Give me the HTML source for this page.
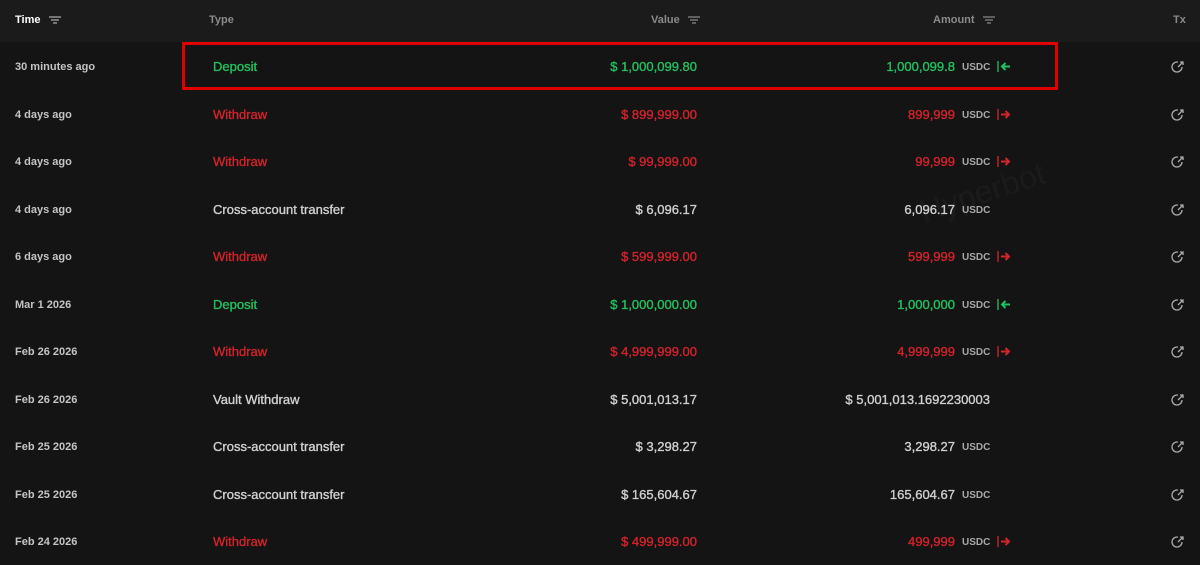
<!DOCTYPE html>
<html><head><meta charset="utf-8"><style>
*{margin:0;padding:0;box-sizing:border-box}
body{width:1200px;height:558px;background:#141414;font-family:"Liberation Sans",sans-serif;overflow:hidden;position:relative;color:#cfcfcf}
.hdr{position:absolute;left:0;top:0;width:1200px;height:42px;background:#1b1b1b}
.h{position:absolute;top:14px;font-size:11px;font-weight:bold;color:#8a8a8a}
.row{position:absolute;left:0;width:1200px;height:47px}
.t{position:absolute;left:15px;top:18px;font-size:11px;font-weight:bold;color:#c4c4c4}
.ty,.v,.a{position:absolute;top:16px;font-size:13px;-webkit-text-stroke:0.35px currentColor}
.ty{left:213px}
.v{right:503px}
.a{right:245px}
.u{position:absolute;left:962px;top:19px;font-size:10px;font-weight:bold;color:#a8a8a8}
.ar{position:absolute;left:997px;top:16px}
.tx{position:absolute;left:1171px;top:17px}
.g{color:#22c05e}.r{color:#d3232b}.w{color:#d0d0d0}
.f{display:inline-block;vertical-align:middle;margin-left:5px}
</style></head><body>
<div class="hdr"></div>
<div class="h" style="left:15px;color:#fff">Time <svg class="f" width="12" height="8"><path d="M0 1h12M2 4h8M4 7h4" stroke="#aaa" stroke-width="1.2"/></svg></div>
<div class="h" style="left:209px">Type</div>
<div class="h" style="left:651px">Value <svg class="f" width="12" height="8"><path d="M0 1h12M2 4h8M4 7h4" stroke="#888" stroke-width="1.2"/></svg></div>
<div class="h" style="left:933px">Amount <svg class="f" width="12" height="8"><path d="M0 1h12M2 4h8M4 7h4" stroke="#888" stroke-width="1.2"/></svg></div>
<div class="h" style="left:1173px">Tx</div>
<div style="position:absolute;left:915px;top:195px;font-size:32px;color:#1b1b1b;transform:rotate(-18deg);transform-origin:left top">Hyperbot</div>

<div class="row" style="top:43px"><div class="t">30 minutes ago</div><div class="ty g">Deposit</div><div class="v g">$ 1,000,099.80</div><div class="a g">1,000,099.8</div><div class="u">USDC</div><div class="ar"><svg width="14" height="11"><path d="M1 0v11" stroke="#22c05e" stroke-width="1.3"/><path d="M13 5.5H5M8.5 2L5 5.5 8.5 9" fill="none" stroke="#22c05e" stroke-width="2"/></svg></div><div class="tx"><svg width="14" height="14"><path d="M11 7a5 5 0 1 1-4-4.9" fill="none" stroke="#aaa" stroke-width="1.3"/><path d="M7 7l5-5M9 2h3v3" fill="none" stroke="#aaa" stroke-width="1.3"/></svg></div></div>
<div style="position:absolute;left:182px;top:42px;width:876px;height:48px;border:3px solid #e00000"></div>

<div class="row" style="top:91px"><div class="t">4 days ago</div><div class="ty r">Withdraw</div><div class="v r">$ 899,999.00</div><div class="a r">899,999</div><div class="u">USDC</div><div class="ar"><svg width="14" height="11"><path d="M1 0v11" stroke="#d3232b" stroke-width="1.3"/><path d="M4 5.5h8M8.5 2L12 5.5 8.5 9" fill="none" stroke="#d3232b" stroke-width="2"/></svg></div><div class="tx"><svg width="14" height="14"><path d="M11 7a5 5 0 1 1-4-4.9" fill="none" stroke="#aaa" stroke-width="1.3"/><path d="M7 7l5-5M9 2h3v3" fill="none" stroke="#aaa" stroke-width="1.3"/></svg></div></div>
<div class="row" style="top:138px"><div class="t">4 days ago</div><div class="ty r">Withdraw</div><div class="v r">$ 99,999.00</div><div class="a r">99,999</div><div class="u">USDC</div><div class="ar"><svg width="14" height="11"><path d="M1 0v11" stroke="#d3232b" stroke-width="1.3"/><path d="M4 5.5h8M8.5 2L12 5.5 8.5 9" fill="none" stroke="#d3232b" stroke-width="2"/></svg></div><div class="tx"><svg width="14" height="14"><path d="M11 7a5 5 0 1 1-4-4.9" fill="none" stroke="#aaa" stroke-width="1.3"/><path d="M7 7l5-5M9 2h3v3" fill="none" stroke="#aaa" stroke-width="1.3"/></svg></div></div>
<div class="row" style="top:186px"><div class="t">4 days ago</div><div class="ty w">Cross-account transfer</div><div class="v w">$ 6,096.17</div><div class="a w">6,096.17</div><div class="u">USDC</div><div class="tx"><svg width="14" height="14"><path d="M11 7a5 5 0 1 1-4-4.9" fill="none" stroke="#aaa" stroke-width="1.3"/><path d="M7 7l5-5M9 2h3v3" fill="none" stroke="#aaa" stroke-width="1.3"/></svg></div></div>
<div class="row" style="top:233px"><div class="t">6 days ago</div><div class="ty r">Withdraw</div><div class="v r">$ 599,999.00</div><div class="a r">599,999</div><div class="u">USDC</div><div class="ar"><svg width="14" height="11"><path d="M1 0v11" stroke="#d3232b" stroke-width="1.3"/><path d="M4 5.5h8M8.5 2L12 5.5 8.5 9" fill="none" stroke="#d3232b" stroke-width="2"/></svg></div><div class="tx"><svg width="14" height="14"><path d="M11 7a5 5 0 1 1-4-4.9" fill="none" stroke="#aaa" stroke-width="1.3"/><path d="M7 7l5-5M9 2h3v3" fill="none" stroke="#aaa" stroke-width="1.3"/></svg></div></div>
<div class="row" style="top:281px"><div class="t">Mar 1 2026</div><div class="ty g">Deposit</div><div class="v g">$ 1,000,000.00</div><div class="a g">1,000,000</div><div class="u">USDC</div><div class="ar"><svg width="14" height="11"><path d="M1 0v11" stroke="#22c05e" stroke-width="1.3"/><path d="M13 5.5H5M8.5 2L5 5.5 8.5 9" fill="none" stroke="#22c05e" stroke-width="2"/></svg></div><div class="tx"><svg width="14" height="14"><path d="M11 7a5 5 0 1 1-4-4.9" fill="none" stroke="#aaa" stroke-width="1.3"/><path d="M7 7l5-5M9 2h3v3" fill="none" stroke="#aaa" stroke-width="1.3"/></svg></div></div>
<div class="row" style="top:328px"><div class="t">Feb 26 2026</div><div class="ty r">Withdraw</div><div class="v r">$ 4,999,999.00</div><div class="a r">4,999,999</div><div class="u">USDC</div><div class="ar"><svg width="14" height="11"><path d="M1 0v11" stroke="#d3232b" stroke-width="1.3"/><path d="M4 5.5h8M8.5 2L12 5.5 8.5 9" fill="none" stroke="#d3232b" stroke-width="2"/></svg></div><div class="tx"><svg width="14" height="14"><path d="M11 7a5 5 0 1 1-4-4.9" fill="none" stroke="#aaa" stroke-width="1.3"/><path d="M7 7l5-5M9 2h3v3" fill="none" stroke="#aaa" stroke-width="1.3"/></svg></div></div>
<div class="row" style="top:376px"><div class="t">Feb 26 2026</div><div class="ty w">Vault Withdraw</div><div class="v w">$ 5,001,013.17</div><div class="a w" style="right:210px">$ 5,001,013.1692230003</div><div class="tx"><svg width="14" height="14"><path d="M11 7a5 5 0 1 1-4-4.9" fill="none" stroke="#aaa" stroke-width="1.3"/><path d="M7 7l5-5M9 2h3v3" fill="none" stroke="#aaa" stroke-width="1.3"/></svg></div></div>
<div class="row" style="top:423px"><div class="t">Feb 25 2026</div><div class="ty w">Cross-account transfer</div><div class="v w">$ 3,298.27</div><div class="a w">3,298.27</div><div class="u">USDC</div><div class="tx"><svg width="14" height="14"><path d="M11 7a5 5 0 1 1-4-4.9" fill="none" stroke="#aaa" stroke-width="1.3"/><path d="M7 7l5-5M9 2h3v3" fill="none" stroke="#aaa" stroke-width="1.3"/></svg></div></div>
<div class="row" style="top:471px"><div class="t">Feb 25 2026</div><div class="ty w">Cross-account transfer</div><div class="v w">$ 165,604.67</div><div class="a w">165,604.67</div><div class="u">USDC</div><div class="tx"><svg width="14" height="14"><path d="M11 7a5 5 0 1 1-4-4.9" fill="none" stroke="#aaa" stroke-width="1.3"/><path d="M7 7l5-5M9 2h3v3" fill="none" stroke="#aaa" stroke-width="1.3"/></svg></div></div>
<div class="row" style="top:518px"><div class="t">Feb 24 2026</div><div class="ty r">Withdraw</div><div class="v r">$ 499,999.00</div><div class="a r">499,999</div><div class="u">USDC</div><div class="ar"><svg width="14" height="11"><path d="M1 0v11" stroke="#d3232b" stroke-width="1.3"/><path d="M4 5.5h8M8.5 2L12 5.5 8.5 9" fill="none" stroke="#d3232b" stroke-width="2"/></svg></div><div class="tx"><svg width="14" height="14"><path d="M11 7a5 5 0 1 1-4-4.9" fill="none" stroke="#aaa" stroke-width="1.3"/><path d="M7 7l5-5M9 2h3v3" fill="none" stroke="#aaa" stroke-width="1.3"/></svg></div></div>
</body></html>
